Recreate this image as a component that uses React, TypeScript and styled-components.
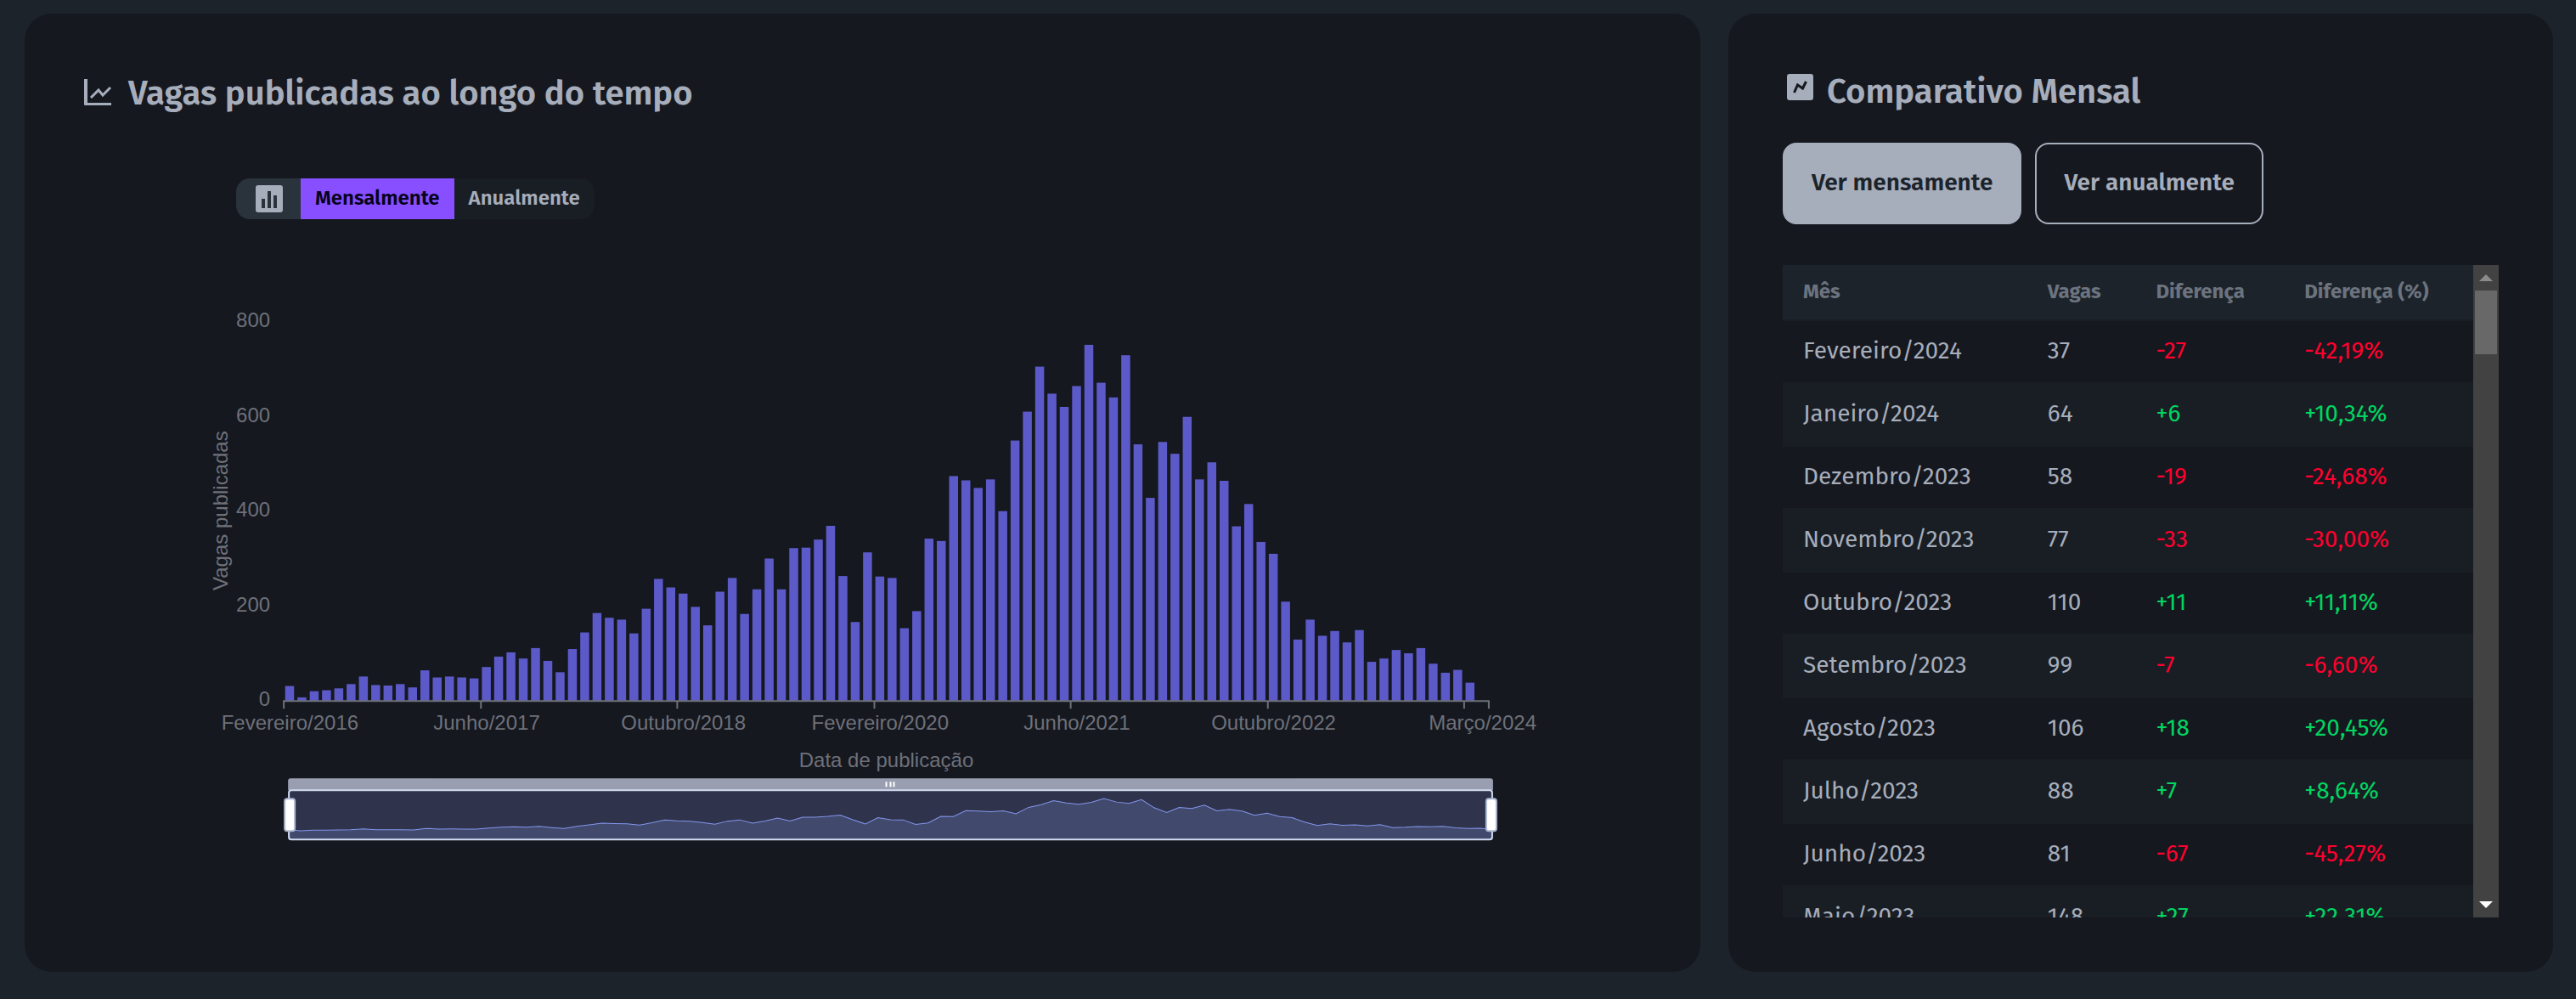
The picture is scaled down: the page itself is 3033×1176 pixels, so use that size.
import React, { useState } from 'react';
import styled, { createGlobalStyle } from 'styled-components';

const color = {
  page: '#1c232a',
  card: '#15181f',
  stripe: '#191e24',
  neutral: '#2a323c',
  text: '#a6adbb',
  muted: '#6c737f',
  axis: '#6e7079',
  primary: '#874fff',
  bar: '#5c5ac8',
  up: '#00d562',
  down: '#ff002e',
};

const uiFont = '"Fira Sans", Roboto, sans-serif';
const chartFont = '"Liberation Sans", Arial, sans-serif';

const GlobalStyle = createGlobalStyle`
  * { box-sizing: border-box; }
  body {
    margin: 0;
    min-height: 100vh;
    background: ${color.page};
    color: ${color.text};
    font-family: ${uiFont};
  }
  button { font-family: inherit; cursor: pointer; }
`;

const Dashboard = styled.main`
  display: grid;
  grid-template-columns: minmax(0, 1973fr) minmax(0, 971fr);
  gap: 33px;
  padding: 16px 27px 32px 29px;
`;

const Card = styled.section<{ $pad: string }>`
  display: flex;
  flex-direction: column;
  padding: ${(p) => p.$pad};
  border-radius: 32px;
  background: ${color.card};
`;

const Title = styled.h2`
  display: flex;
  align-items: flex-start;
  gap: 12px;
  margin: 0;
  font-size: 40px;
  font-weight: 600;
  line-height: 48px;
`;

const TitleIcon = styled.svg`
  flex: none;
  width: 40px;
  height: 40px;
`;

const Join = styled.div`
  display: flex;
  align-self: flex-start;
  height: 48px;
  margin: 76px 0 82px 179px;
  overflow: hidden;
  border-radius: 16px;
  background: ${color.stripe};
`;

const JoinIcon = styled.span`
  display: flex;
  align-items: center;
  justify-content: center;
  width: 76px;
  padding-left: 2px;
  background: ${color.neutral};
`;

const JoinButton = styled.button<{ $active: boolean }>`
  padding: 0 17px 2px;
  border: 0;
  background: ${(p) => (p.$active ? color.primary : 'transparent')};
  color: ${(p) => (p.$active ? '#06021a' : color.text)};
  font-size: 24px;
  font-weight: 600;
`;

const Chart = styled.svg`
  display: block;
  width: 100%;
  height: auto;
  font-family: ${chartFont};
  font-size: 24px;
`;

const Actions = styled.div`
  display: flex;
  gap: 16px;
  margin: 36px 0 48px;
`;

const ActionButton = styled.button<{ $active: boolean }>`
  height: 96px;
  padding: 0 32px 4px;
  border: 2px solid ${color.text};
  border-radius: 16px;
  background: ${(p) => (p.$active ? color.text : 'transparent')};
  color: ${(p) => (p.$active ? color.page : color.text)};
  font-size: 28px;
  font-weight: 600;
  white-space: nowrap;
`;

const TablePanel = styled.div`
  display: grid;
  grid-template-columns: minmax(0, 1fr) 30px;
  height: 768px;
`;

const Viewport = styled.div`
  overflow-y: auto;
  scrollbar-width: none;
`;

const Table = styled.table`
  width: 100%;
  table-layout: fixed;
  border-collapse: separate;
  border-spacing: 0;
  text-align: left;
`;

const Column = styled.col<{ $share: number }>`
  width: ${(p) => p.$share}%;
`;

const HeadCell = styled.th`
  height: 66px;
  padding: 0 24px 2px;
  border-bottom: 2px solid ${color.stripe};
  background: ${color.page};
  color: ${color.muted};
  font-size: 24px;
  font-weight: 700;
  white-space: nowrap;
`;

const Row = styled.tr`
  &:nth-child(even) { background: ${color.stripe}; }
`;

const Cell = styled.td<{ $tone?: string }>`
  height: 74px;
  padding: 0 24px 4px;
  border-bottom: 2px solid ${color.stripe};
  color: ${(p) => p.$tone ?? color.text};
  font-size: 28px;
  white-space: nowrap;
`;

const Scrollbar = styled.div`
  display: flex;
  flex-direction: column;
  background: #424242;
`;

const ScrollButton = styled.button`
  display: flex;
  align-items: center;
  justify-content: center;
  width: 30px;
  height: 30px;
  padding: 0;
  border: 0;
  background: transparent;
`;

const ScrollThumb = styled.div`
  height: 75px;
  margin: 0 2px auto;
  background: #686868;
`;

const perMonth = [
  30, 6, 19, 21, 25, 34, 50, 32, 31, 34, 27, 63, 48, 50, 48, 46, 70, 92, 101, 88, 110, 83, 59, 108,
  143, 184, 174, 170, 141, 193, 256, 238, 225, 197, 158, 229, 258, 182, 234, 299, 234, 321, 322, 339,
  368, 262, 165, 312, 261, 258, 152, 188, 341, 336, 473, 464, 448, 466, 399, 548, 609, 704, 647, 619,
  663, 750, 670, 639, 728, 540, 427, 545, 520, 598, 466, 502, 463, 367, 414, 334, 309, 208, 128, 170,
  136, 146, 122, 148, 81, 88, 106, 99, 110, 77, 58, 64, 37,
];

const slots = 98;
const plot = { left: 235, right: 1653, top: 39, bottom: 485 };
const slotWidth = (plot.right - plot.left) / slots;
const unit = (plot.bottom - plot.top) / 800;

const xLabels: [number, string][] = [
  [0, 'Fevereiro/2016'],
  [16, 'Junho/2017'],
  [32, 'Outubro/2018'],
  [48, 'Fevereiro/2020'],
  [64, 'Junho/2021'],
  [80, 'Outubro/2022'],
  [97, 'Março/2024'],
];
const xTicks = [0, 16, 32, 48, 64, 80, 96, 98];

const zoom = { left: 240, right: 1658, top: 590, bottom: 648, zero: 638 };
const zoomStep = (zoom.right - zoom.left) / (perMonth.length - 1);
const trend = perMonth
  .map((v, i) => `${(zoom.left + i * zoomStep).toFixed(1)},${(zoom.zero - v * 0.051).toFixed(1)}`)
  .join(' ');

function ZoomHandle({ x }: { x: number }) {
  return <rect x={x - 6} y={600} width={12} height={38} rx={3} fill="#fff" stroke="#acb8d1" strokeWidth={2} />;
}

function JobsChart() {
  return (
    <Chart viewBox="0 0 1832 670" role="img" aria-label="Vagas publicadas por mês">
      <g fill={color.axis}>
        {[0, 200, 400, 600, 800].map((v) => (
          <text key={v} x={219} y={plot.bottom - v * unit + 6} textAnchor="end">{v}</text>
        ))}
        <text transform="translate(169 261) rotate(-90)" textAnchor="middle">Vagas publicadas</text>
        {xLabels.map(([i, label]) => (
          <text key={label} x={plot.left + (i + 0.5) * slotWidth} y={519} textAnchor="middle">{label}</text>
        ))}
        <text x={944} y={563} textAnchor="middle">Data de publicação</text>
      </g>
      <g fill={color.bar}>
        {perMonth.map((v, i) => (
          <rect
            key={i}
            x={plot.left + i * slotWidth + 1.6}
            y={plot.bottom - 1 - v * unit}
            width={10.5}
            height={v * unit + 1}
          />
        ))}
      </g>
      <g stroke={color.axis} strokeWidth={2}>
        <line x1={plot.left - 1} y1={plot.bottom} x2={plot.right + 1} y2={plot.bottom} />
        {xTicks.map((i) => {
          const x = Math.round(plot.left + i * slotWidth);
          return <line key={i} x1={x} y1={plot.bottom} x2={x} y2={plot.bottom + 9} />;
        })}
      </g>
      <path d="M240 590v-11q0-3 3-3h1412q3 0 3 3v11z" fill="#9a9eb1" />
      <g fill="#fff">
        {[943, 948, 952].map((x) => (
          <rect key={x} x={x} y={580} width={2} height={6} />
        ))}
      </g>
      <rect x={zoom.left} y={zoom.top} width={1418} height={58} fill="#2f334c" />
      <polygon points={`${zoom.left},${zoom.bottom} ${trend} ${zoom.right},${zoom.bottom}`} fill="#414a6d" />
      <polyline points={trend} fill="none" stroke="#8496ec" strokeWidth={1} />
      <rect x={241} y={590} width={1416} height={58} rx={3} fill="none" stroke="#d2dbee" strokeWidth={2} />
      <ZoomHandle x={242} />
      <ZoomHandle x={1656} />
    </Chart>
  );
}

type Entry = [month: string, jobs: number, diff: string, percent: string];

const rows: Entry[] = [
  ['Fevereiro/2024', 37, '-27', '-42,19%'],
  ['Janeiro/2024', 64, '+6', '+10,34%'],
  ['Dezembro/2023', 58, '-19', '-24,68%'],
  ['Novembro/2023', 77, '-33', '-30,00%'],
  ['Outubro/2023', 110, '+11', '+11,11%'],
  ['Setembro/2023', 99, '-7', '-6,60%'],
  ['Agosto/2023', 106, '+18', '+20,45%'],
  ['Julho/2023', 88, '+7', '+8,64%'],
  ['Junho/2023', 81, '-67', '-45,27%'],
  ['Maio/2023', 148, '+27', '+22,31%'],
];

function ComparisonTable() {
  return (
    <TablePanel>
      <Viewport>
        <Table>
          <colgroup>
            <Column $share={35.4} />
            <Column $share={15.7} />
            <Column $share={21.5} />
            <Column $share={27.4} />
          </colgroup>
          <thead>
            <tr>
              <HeadCell scope="col">Mês</HeadCell>
              <HeadCell scope="col">Vagas</HeadCell>
              <HeadCell scope="col">Diferença</HeadCell>
              <HeadCell scope="col">Diferença (%)</HeadCell>
            </tr>
          </thead>
          <tbody>
            {rows.map(([month, jobs, diff, percent]) => {
              const tone = diff.startsWith('-') ? color.down : color.up;
              return (
                <Row key={month}>
                  <Cell>{month}</Cell>
                  <Cell>{jobs}</Cell>
                  <Cell $tone={tone}>{diff}</Cell>
                  <Cell $tone={tone}>{percent}</Cell>
                </Row>
              );
            })}
          </tbody>
        </Table>
      </Viewport>
      <Scrollbar>
        <ScrollButton type="button" aria-label="Rolar para cima">
          <svg width="16" height="8" viewBox="0 0 16 8"><path d="M8 0l8 8H0z" fill="#8b8b8b" /></svg>
        </ScrollButton>
        <ScrollThumb />
        <ScrollButton type="button" aria-label="Rolar para baixo">
          <svg width="16" height="8" viewBox="0 0 16 8"><path d="M0 0h16L8 8z" fill="#fff" /></svg>
        </ScrollButton>
      </Scrollbar>
    </TablePanel>
  );
}

export default function App() {
  const [chartMonthly, setChartMonthly] = useState(true);
  const [tableMonthly, setTableMonthly] = useState(true);

  return (
    <>
      <GlobalStyle />
      <Dashboard>
        <Card $pad="70px 70px 64px">
          <Title>
            <TitleIcon viewBox="0 0 40 40" aria-hidden="true">
              <path d="M0 7h4v28h28v3H1q-1 0-1-1z" fill={color.text} />
              <path d="M8 29l9-9 5 6 9-9" fill="none" stroke={color.text} strokeWidth="3" />
            </TitleIcon>
            Vagas publicadas ao longo do tempo
          </Title>
          <Join>
            <JoinIcon>
              <svg width="32" height="32" viewBox="0 0 32 32" aria-hidden="true">
                <rect width="32" height="32" rx="3" fill={color.text} />
                <path d="M7 16h4v11H7zM14 7h4v20h-4zM21 12h4v15h-4z" fill={color.neutral} />
              </svg>
            </JoinIcon>
            <JoinButton type="button" $active={chartMonthly} aria-pressed={chartMonthly} onClick={() => setChartMonthly(true)}>
              Mensalmente
            </JoinButton>
            <JoinButton type="button" $active={!chartMonthly} aria-pressed={!chartMonthly} onClick={() => setChartMonthly(false)}>
              Anualmente
            </JoinButton>
          </Join>
          <JobsChart />
        </Card>
        <Card $pad="68px 64px 64px">
          <Title>
            <TitleIcon viewBox="0 0 40 40" aria-hidden="true">
              <rect x="5" y="3" width="31" height="31" rx="3" fill={color.text} />
              <path d="M13.5 25l4-9 6 4 4-8" fill="none" stroke={color.card} strokeWidth="3" />
            </TitleIcon>
            Comparativo Mensal
          </Title>
          <Actions>
            <ActionButton type="button" $active={tableMonthly} aria-pressed={tableMonthly} onClick={() => setTableMonthly(true)}>
              Ver mensamente
            </ActionButton>
            <ActionButton type="button" $active={!tableMonthly} aria-pressed={!tableMonthly} onClick={() => setTableMonthly(false)}>
              Ver anualmente
            </ActionButton>
          </Actions>
          <ComparisonTable />
        </Card>
      </Dashboard>
    </>
  );
}
